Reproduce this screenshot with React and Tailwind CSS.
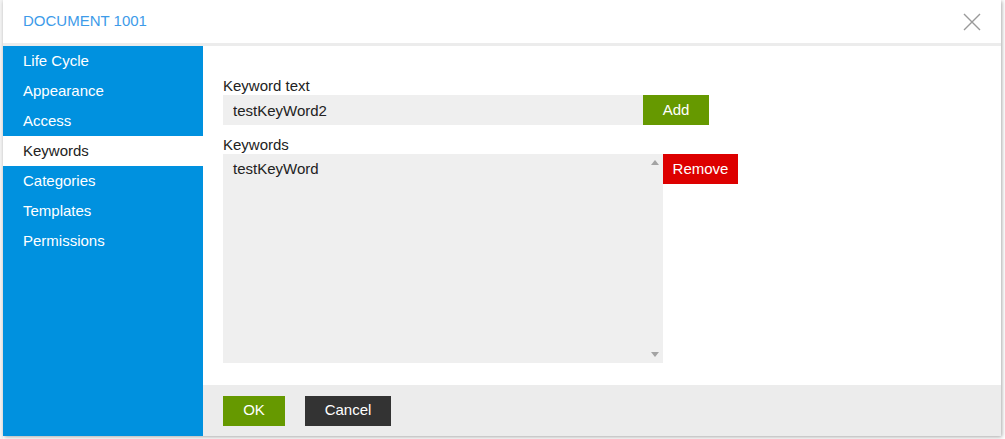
import { useState } from "react";

const tabs = ["Life Cycle", "Appearance", "Access", "Keywords", "Categories", "Templates", "Permissions"];

export default function App() {
  const [active, setActive] = useState("Keywords");
  const [text, setText] = useState("testKeyWord2");

  return (
    <div
      className="relative h-[439px] w-[1005px] overflow-hidden bg-white text-[15px] text-[#222]"
      style={{ fontFamily: '"Liberation Sans", Arial, sans-serif' }}
    >
      {/* Page behind the dialog */}
      <div className="absolute left-0 top-0 h-full w-[3px] bg-[#f4f4f4]" />

      {/* Dialog */}
      <div className="absolute left-[3px] top-0 flex h-[436px] w-[998px] flex-col bg-white shadow-[1px_1px_4px_rgba(0,0,0,0.35)]">
        {/* Header */}
        <div className="flex h-[46px] shrink-0 items-center justify-between border-b-[3px] border-[#ececec] pl-5 pr-[20px]">
          <span className="text-[15px] text-[#3d9be9]">DOCUMENT 1001</span>
          <svg width="18" height="18" viewBox="0 0 18 18" className="mt-[1px]">
            <path d="M1 1 L17 17 M17 1 L1 17" stroke="#9a9a9a" strokeWidth="1.4" fill="none" />
          </svg>
        </div>

        <div className="flex min-h-0 flex-1">
          {/* Sidebar */}
          <nav className="w-[200px] shrink-0 bg-[#0091df]">
            {tabs.map((t) => (
              <div
                key={t}
                onClick={() => setActive(t)}
                className={
                  "flex h-[30px] cursor-pointer items-center pl-5 " +
                  (t === active ? "bg-white text-[#222]" : "text-white")
                }
              >
                {t}
              </div>
            ))}
          </nav>

          {/* Main */}
          <div className="flex flex-1 flex-col">
            <div className="flex-1 pl-5 pt-[30px]">
              <div className="leading-[19px]">Keyword text</div>
              <div className="flex">
                <input
                  value={text}
                  onChange={(e) => setText(e.target.value)}
                  className="h-[30px] w-[420px] bg-[#efefef] px-[10px] text-[15px] text-[#222] outline-none"
                />
                <button className="h-[30px] w-[66px] bg-[#669900] text-[15px] text-white">Add</button>
              </div>

              <div className="mt-[10px] leading-[19px]">Keywords</div>
              <div className="flex items-start">
                <div className="relative h-[209px] w-[440px] bg-[#efefef]">
                  <div className="px-[10px] pt-[5px] leading-[19px]">testKeyWord</div>
                  <div className="absolute right-0 top-0 flex h-full w-[17px] flex-col items-center justify-between py-[6px]">
                    <svg width="8" height="5" viewBox="0 0 8 5">
                      <path d="M0 5 L4 0 L8 5 Z" fill="#a3a3a3" />
                    </svg>
                    <svg width="8" height="5" viewBox="0 0 8 5">
                      <path d="M0 0 L8 0 L4 5 Z" fill="#a3a3a3" />
                    </svg>
                  </div>
                </div>
                <button className="h-[30px] w-[75px] bg-[#dd0000] text-[15px] text-white">Remove</button>
              </div>
            </div>

            {/* Footer */}
            <div className="flex h-[51px] shrink-0 items-center gap-5 bg-[#ececec] pl-5">
              <button className="h-[30px] w-[62px] bg-[#669900] text-[15px] text-white">OK</button>
              <button className="h-[30px] w-[86px] bg-[#333333] text-[15px] text-white">Cancel</button>
            </div>
          </div>
        </div>
      </div>
    </div>
  );
}
